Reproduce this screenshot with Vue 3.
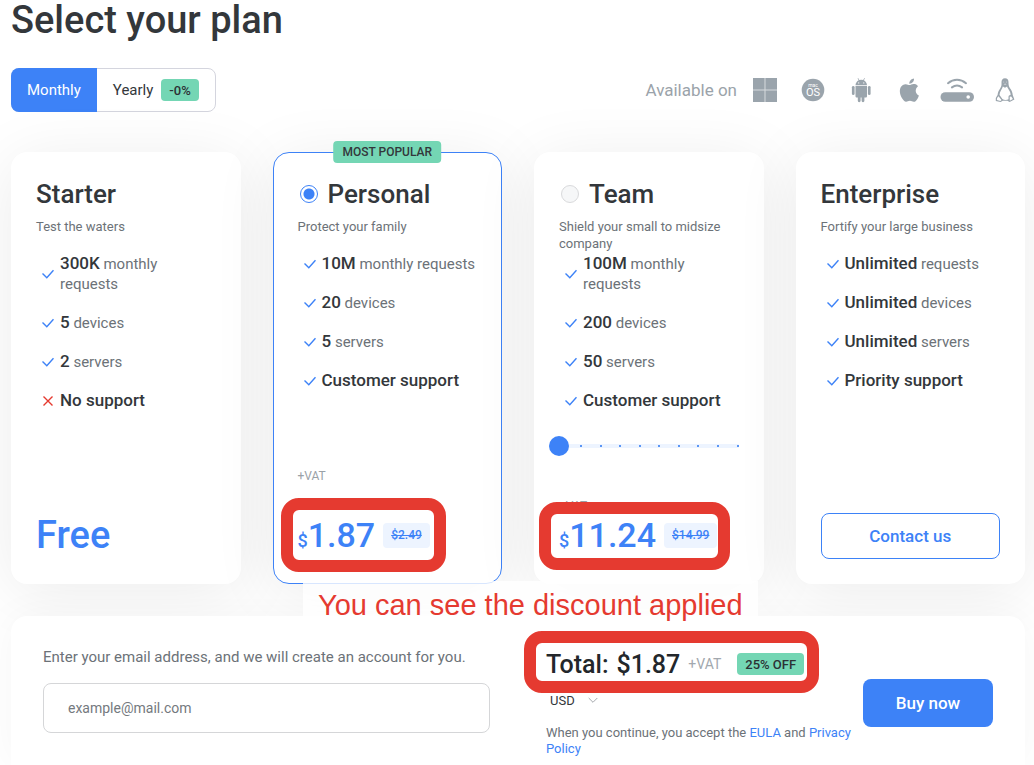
<script setup>
import { ref } from 'vue'

const billing = ref('monthly')
const selected = ref('personal')
const seats = ref(0)
const email = ref('')
const currency = ref('USD')

const plans = [
  {
    id: 'starter',
    name: 'Starter',
    tagline: 'Test the waters',
    features: [
      { strong: '300K', rest: 'monthly requests' },
      { strong: '5', rest: 'devices' },
      { strong: '2', rest: 'servers' },
      { strong: 'No support', missing: true }
    ],
    free: true
  },
  {
    id: 'personal',
    name: 'Personal',
    tagline: 'Protect your family',
    popular: true,
    features: [
      { strong: '10M', rest: 'monthly requests' },
      { strong: '20', rest: 'devices' },
      { strong: '5', rest: 'servers' },
      { strong: 'Customer support' }
    ],
    price: '1.87',
    oldPrice: '$2.49'
  },
  {
    id: 'team',
    name: 'Team',
    tagline: 'Shield your small to midsize company',
    features: [
      { strong: '100M', rest: 'monthly requests' },
      { strong: '200', rest: 'devices' },
      { strong: '50', rest: 'servers' },
      { strong: 'Customer support' }
    ],
    slider: true,
    price: '11.24',
    oldPrice: '$14.99'
  },
  {
    id: 'enterprise',
    name: 'Enterprise',
    tagline: 'Fortify your large business',
    features: [
      { strong: 'Unlimited', rest: 'requests' },
      { strong: 'Unlimited', rest: 'devices' },
      { strong: 'Unlimited', rest: 'servers' },
      { strong: 'Priority support' }
    ],
    contact: true
  }
]
</script>

<template>
  <main class="page">
    <h1>Select your plan</h1>

    <div class="toolbar">
      <div class="toggle" role="group" aria-label="Billing period">
        <button type="button" :class="{ active: billing === 'monthly' }" @click="billing = 'monthly'">Monthly</button>
        <button type="button" :class="{ active: billing === 'yearly' }" @click="billing = 'yearly'">
          Yearly <span class="tag">-0%</span>
        </button>
      </div>

      <div class="platforms">
        <span>Available on</span>
        <svg viewBox="0 0 24 24" role="img" aria-label="Windows">
          <rect width="24" height="24" fill-opacity=".4" />
          <path d="M0 0h11.500v11.500H0zM12.500 0H24v11.500H12.500zM0 12.500h11.500V24H0zM12.500 12.500H24V24H12.500z" />
        </svg>
        <svg viewBox="0 0 24 24" role="img" aria-label="macOS">
          <circle cx="12" cy="12" r="11.300" />
          <text x="12" y="9" class="mac-small">mac</text>
          <text x="12" y="18" class="mac-big">OS</text>
        </svg>
        <svg viewBox="0 0 24 24" role="img" aria-label="Android">
          <path d="M6.500 7.200C6.700 4.900 8 3.200 9.700 2.300L8.600.4l.5-.3 1.200 2a6.300 6.300 0 0 1 3.900 0l1.200-2 .5.3-1.100 1.900c1.700.9 3 2.600 3.200 4.900z" />
          <path d="M6.500 8h11.500v10.300c0 .8-.6 1.300-1.300 1.300h-1.300v3.200a1.400 1.400 0 0 1-2.800 0v-3.200h-1v3.200a1.400 1.400 0 0 1-2.800 0v-3.200H7.800c-.7 0-1.300-.5-1.300-1.300z" />
          <rect x="2.900" y="8" width="2.700" height="9" rx="1.350" />
          <rect x="18.900" y="8" width="2.700" height="9" rx="1.350" />
          <circle cx="9.700" cy="4.900" r=".6" class="cut" />
          <circle cx="14.800" cy="4.900" r=".6" class="cut" />
        </svg>
        <svg viewBox="0 0 24 24" role="img" aria-label="Apple">
          <path d="M18.500 13.300c0-2.400 1.900-3.600 2-3.700-1.100-1.700-2.900-1.900-3.500-1.900-1.500-.2-2.900.9-3.700.9-.8 0-1.900-.9-3.200-.8-1.600 0-3.100 1-4 2.400-1.700 3-.4 7.400 1.300 9.800.8 1.200 1.800 2.500 3.100 2.500 1.200-.1 1.700-.8 3.200-.8s1.900.8 3.200.8c1.300 0 2.200-1.200 3-2.400.9-1.400 1.300-2.700 1.300-2.800 0 0-2.600-1-2.700-4zM16.100 6.100c.7-.8 1.100-2 1-3.100-1 0-2.200.7-2.900 1.500-.6.7-1.200 1.900-1 3 1.100.1 2.200-.6 2.900-1.400z" transform="translate(-3.500 -3.200) scale(1.200)" />
        </svg>
        <svg viewBox="0 0 24 24" role="img" aria-label="Router">
          <rect x="-4.500" y="14.200" width="33.500" height="9.600" rx="4.800" />
          <circle cx="23.200" cy="19" r="1.800" class="cut" />
          <path class="line" d="M3 5.200c5.500-4.600 12.500-4.600 18 0M6.900 9.400c3.200-2.500 7-2.500 10.200 0" />
        </svg>
        <svg viewBox="0 0 24 24" role="img" aria-label="Linux">
          <path d="M12 .3c-2.400 0-3.600 1.700-3.500 4 .1 3 .1 4.100-1.500 6.400-1.400 2-2.300 4.100-2.400 6.400L2.800 20v3l4.800 1 2.200-1.300h4.600l2.200 1.300 4.800-2.500-1.700-4.400c0-2.500-1-4.700-2.500-6.700-1.500-2.100-1.700-3.400-1.700-6.100C15.500 1.900 14.300.3 12 .3z" />
          <path class="cut" d="M9.900 8.600 12 9.700l2.100-1.100c.6 2.400 3.600 4.700 3.500 8.400-1.500 0-2.100.7-2.100 2.200v2.100c-1.700 1-4.500 1-6.100-.2L6.500 16.900c.2-3 2.500-5.600 3.400-8.300z" />
          <path class="cut" d="m5.500 18.300 3 3.800-1.100.8-3.500-.8.200-2zM16.700 18.700l1.500-.1 1.700 2.500-3.100 1.700z" />
          <path class="cut soft" d="m10.500 6.300 1.700-.9 1.500.9-1.600.8z" />
          <circle cx="10.700" cy="4" r=".6" class="cut soft" />
          <circle cx="13.400" cy="4" r=".6" class="cut soft" />
        </svg>
      </div>
    </div>

    <section class="plans">
      <article v-for="plan in plans" :key="plan.id" class="card" :class="{ popular: plan.popular }">
        <span v-if="plan.popular" class="ribbon">MOST POPULAR</span>
        <h2>
          <label v-if="plan.price">
            <input v-model="selected" type="radio" name="plan" :value="plan.id" />
            {{ plan.name }}
          </label>
          <template v-else>{{ plan.name }}</template>
        </h2>
        <p class="tagline">{{ plan.tagline }}</p>

        <ul>
          <li v-for="(f, i) in plan.features" :key="i">
            <svg v-if="f.missing" class="cross" viewBox="0 0 12 12" aria-hidden="true"><path d="m1.500 1.500 9 9m0-9-9 9" /></svg>
            <svg v-else viewBox="0 0 12 12" aria-hidden="true"><path d="m.5 5.500 4.300 4.300 6.700-7.600" /></svg>
            <span><strong>{{ f.strong }}</strong> {{ f.rest }}</span>
          </li>
        </ul>

        <div v-if="plan.slider" class="slider">
          <input v-model="seats" type="range" min="0" max="9" aria-label="Team size" />
          <div class="ticks" aria-hidden="true"><i v-for="n in 9" :key="n"></i></div>
        </div>

        <div class="bottom">
          <div v-if="plan.free" class="price free">Free</div>
          <button v-else-if="plan.contact" type="button" class="contact">Contact us</button>
          <template v-else>
            <div class="vat" :class="{ tight: plan.slider }">+VAT</div>
            <div class="price">
              <span class="sign">$</span>{{ plan.price }}<s>{{ plan.oldPrice }}</s>
              <div class="mark" :class="plan.id" aria-hidden="true"></div>
            </div>
          </template>
        </div>
      </article>
    </section>

    <form class="checkout" @submit.prevent>
      <div class="email">
        <label for="email">Enter your email address, and we will create an account for you.</label>
        <input id="email" v-model="email" type="email" placeholder="example@mail.com" />
      </div>

      <div class="summary">
        <div class="total">
          <span>Total:</span>
          <span class="amount">$1.87</span>
          <small>+VAT</small>
          <span class="tag">25% OFF</span>
          <div class="mark sum" aria-hidden="true"></div>
        </div>
        <div class="currency">
          <select v-model="currency" aria-label="Currency">
            <option>USD</option>
            <option>EUR</option>
          </select>
          <svg viewBox="0 0 10 10" aria-hidden="true"><path d="m.7 3 4.300 4.300L9.300 3" /></svg>
        </div>
        <p class="terms">
          When you continue, you accept the <a href="#eula">EULA</a> and <a href="#privacy">Privacy Policy</a>
        </p>
      </div>

      <button type="submit" class="buy">Buy now</button>
      <p class="caption">You can see the discount applied</p>
    </form>
  </main>
</template>

<style>
body {
  background: #fff;
}
</style>

<style scoped>
.page {
  box-sizing: border-box;
  display: flex;
  flex-direction: column;
  min-height: 100vh;
  padding: 0 9px 0 11px;
  color: #33373b;
  font-family: Roboto, "Noto Sans", sans-serif;
  font-size: 15px;
}
.page *,
.page *::before {
  box-sizing: border-box;
}
h1,
h2,
p,
ul {
  margin: 0;
  padding: 0;
}
button,
input,
select {
  font: inherit;
  color: inherit;
}
h1 {
  font-size: 38px;
  line-height: 40px;
  font-weight: 500;
}
.toolbar {
  display: flex;
  justify-content: space-between;
  align-items: center;
  margin-top: 28px;
  padding-right: 8px;
}
.toggle {
  display: flex;
  height: 44px;
  border: 1px solid #d4d5de;
  border-radius: 8px;
  background: #fff;
}
.toggle button {
  display: flex;
  align-items: center;
  gap: 8px;
  padding: 0 16px;
  border: 0;
  border-radius: 0 7px 7px 0;
  background: none;
}
.toggle button:first-child {
  margin: -1px 0 -1px -1px;
  border-radius: 8px 0 0 8px;
}
.toggle .active {
  background: #3d82f7;
  color: #fff;
}
.tag {
  display: inline-flex;
  align-items: center;
  height: 22px;
  padding: 0 8px;
  border-radius: 4px;
  background: #74d6b4;
  color: #2c3135;
  font-size: 13px;
  font-weight: 500;
}
.platforms {
  display: flex;
  align-items: center;
  gap: 24px;
  color: #9ba3aa;
  font-size: 17px;
}
.platforms span {
  margin-right: -8px;
}
.platforms svg {
  width: 24px;
  height: 24px;
  overflow: visible;
  fill: #9aa4ac;
}
.platforms .cut {
  fill: #fff;
}
.platforms .soft {
  opacity: 0.5;
}
.platforms .line {
  fill: none;
  stroke: #9aa4ac;
  stroke-width: 2;
  stroke-linecap: round;
}
.platforms text {
  fill: #fff;
  text-anchor: middle;
}
.mac-small {
  font-size: 5px;
}
.mac-big {
  font-size: 11px;
}
.plans {
  display: grid;
  grid-template-columns: repeat(4, minmax(0, 1fr));
  gap: 32px;
  margin-top: 40px;
}
.card {
  position: relative;
  display: flex;
  flex-direction: column;
  min-height: 432px;
  padding: 25px 24px 24px;
  border: 1px solid transparent;
  border-radius: 16px;
  background: #fff;
  background-clip: border-box;
  box-shadow: 0 8px 64px rgba(0, 0, 0, 0.08);
}
.card.popular {
  border-color: #3d82f7;
}
.ribbon {
  position: absolute;
  top: -12px;
  left: 50%;
  transform: translateX(-50%);
  padding: 0 9px;
  border-radius: 4px;
  background: #74d6b4;
  font-size: 12px;
  line-height: 22px;
  font-weight: 500;
  white-space: nowrap;
}
h2 {
  font-size: 26px;
  line-height: 32px;
  font-weight: 500;
}
h2 label {
  display: flex;
  align-items: center;
  gap: 10px;
}
h2 input {
  appearance: none;
  width: 18px;
  height: 18px;
  margin: 0 0 0 2px;
  border: 1px solid #d9dadc;
  border-radius: 50%;
  background: #f6f7f8;
}
h2 input:checked {
  border-color: #3d82f7;
  background: radial-gradient(circle, #3d82f7 5px, #fff 6px);
}
.tagline {
  min-height: 34px;
  margin-top: 8px;
  color: #6c7278;
  font-size: 13px;
  line-height: 17px;
}
ul {
  display: flex;
  flex-direction: column;
  gap: 18px;
  margin-top: 1px;
  padding-left: 6px;
  list-style: none;
}
li {
  display: flex;
  align-items: center;
  gap: 6px;
  color: #6c7278;
  font-size: 15px;
  line-height: 20px;
}
li svg {
  flex: none;
  width: 12px;
  height: 12px;
  fill: none;
  stroke: #3d82f7;
  stroke-width: 1.400;
}
li .cross {
  stroke: #e5392f;
}
strong {
  color: #33373b;
  font-size: 17px;
  font-weight: 500;
}
.slider {
  position: relative;
  height: 20px;
  margin: 25px 0 0 -10px;
}
.slider input {
  appearance: none;
  display: block;
  width: 100%;
  height: 20px;
  margin: 0;
  background: linear-gradient(#edf4ff, #edf4ff) center / 100% 4px no-repeat;
}
.slider input::-webkit-slider-thumb {
  appearance: none;
  width: 20px;
  height: 20px;
  border-radius: 50%;
  background: #3d82f7;
}
.ticks {
  position: absolute;
  inset: 9px 0 9px 31px;
  display: flex;
  justify-content: space-between;
  pointer-events: none;
}
.ticks i {
  width: 2px;
  height: 2px;
  background: #5b96f5;
}
.bottom {
  margin-top: auto;
}
.vat {
  margin-bottom: 26px;
  color: #9aa1a7;
  font-size: 12px;
  line-height: 18px;
}
.vat.tight {
  margin-bottom: -4px;
}
.price {
  position: relative;
  display: flex;
  align-items: baseline;
  height: 48px;
  color: #3d82f7;
  font-size: 34px;
  line-height: 48px;
  font-weight: 500;
}
.price.free {
  font-size: 38px;
}
.sign {
  font-size: 18px;
}
.price s {
  align-self: center;
  height: 25px;
  margin-left: 8px;
  padding: 0 8px;
  border-radius: 4px;
  background: #edf4ff;
  font-size: 12px;
  line-height: 25px;
}
.mark {
  position: absolute;
  z-index: 2;
  border: 12px solid #e53a30;
  border-radius: 18px;
  pointer-events: none;
}
.mark.personal {
  left: -17px;
  top: -13px;
  width: 165px;
  height: 74px;
}
.mark.team {
  left: -20px;
  top: -9px;
  width: 191px;
  height: 68px;
}
.mark.sum {
  left: -22px;
  top: -17px;
  width: 295px;
  height: 62px;
}
.contact {
  display: block;
  width: 100%;
  height: 46px;
  border: 1px solid #3d82f7;
  border-radius: 8px;
  background: none;
  color: #3d82f7;
  font-size: 17px;
  font-weight: 500;
}
.checkout {
  position: relative;
  flex: 1;
  display: grid;
  grid-template-columns: 3fr 2fr 130px;
  align-content: start;
  margin-top: 32px;
  padding: 32px 32px 8px;
  border-radius: 16px 16px 0 0;
  background: #fff;
  box-shadow: 0 0 40px rgba(0, 0, 0, 0.04);
}
.email {
  display: flex;
  flex-direction: column;
  gap: 17px;
  margin-right: 45px;
  color: #6c7278;
  font-size: 15px;
  line-height: 18px;
}
.email input {
  width: 100%;
  height: 50px;
  padding: 0 24px;
  border: 1px solid #d5d6d8;
  border-radius: 8px;
  background: #fff;
  font-size: 14px;
}
.email input::placeholder {
  color: #74797e;
}
.summary {
  margin: 0 8px 0 11px;
}
.total {
  position: relative;
  display: flex;
  align-items: center;
  height: 32px;
  color: #23272b;
  font-size: 25px;
  font-weight: 500;
  white-space: nowrap;
}
.amount {
  margin-left: 8px;
}
.total small {
  margin-left: 8px;
  color: #a2a8ae;
  font-size: 14px;
  font-weight: 400;
}
.total .tag {
  margin-left: 16px;
}
.currency {
  position: relative;
  display: flex;
  align-items: center;
  width: 48px;
  margin: 10px 0 15px 4px;
}
.currency select {
  appearance: none;
  width: 100%;
  height: 20px;
  padding: 0;
  border: 0;
  background: none;
  font-size: 13px;
}
.currency svg {
  position: absolute;
  right: 0;
  width: 10px;
  height: 10px;
  fill: none;
  stroke: #a5a9ad;
  pointer-events: none;
}
.terms {
  color: #6c7278;
  font-size: 13px;
  line-height: 16px;
}
a {
  color: #3d82f7;
  text-decoration: none;
}
.buy {
  align-self: center;
  height: 48px;
  border: 0;
  border-radius: 8px;
  background: #3d82f7;
  color: #fff;
  font-size: 17px;
  font-weight: 500;
}
.caption {
  position: absolute;
  left: 292px;
  top: -35px;
  padding: 0 15px;
  background: rgba(255, 255, 255, 0.8);
  color: #e53a30;
  font-family: "Liberation Sans", sans-serif;
  font-size: 29px;
  line-height: 48px;
  white-space: nowrap;
}
</style>
